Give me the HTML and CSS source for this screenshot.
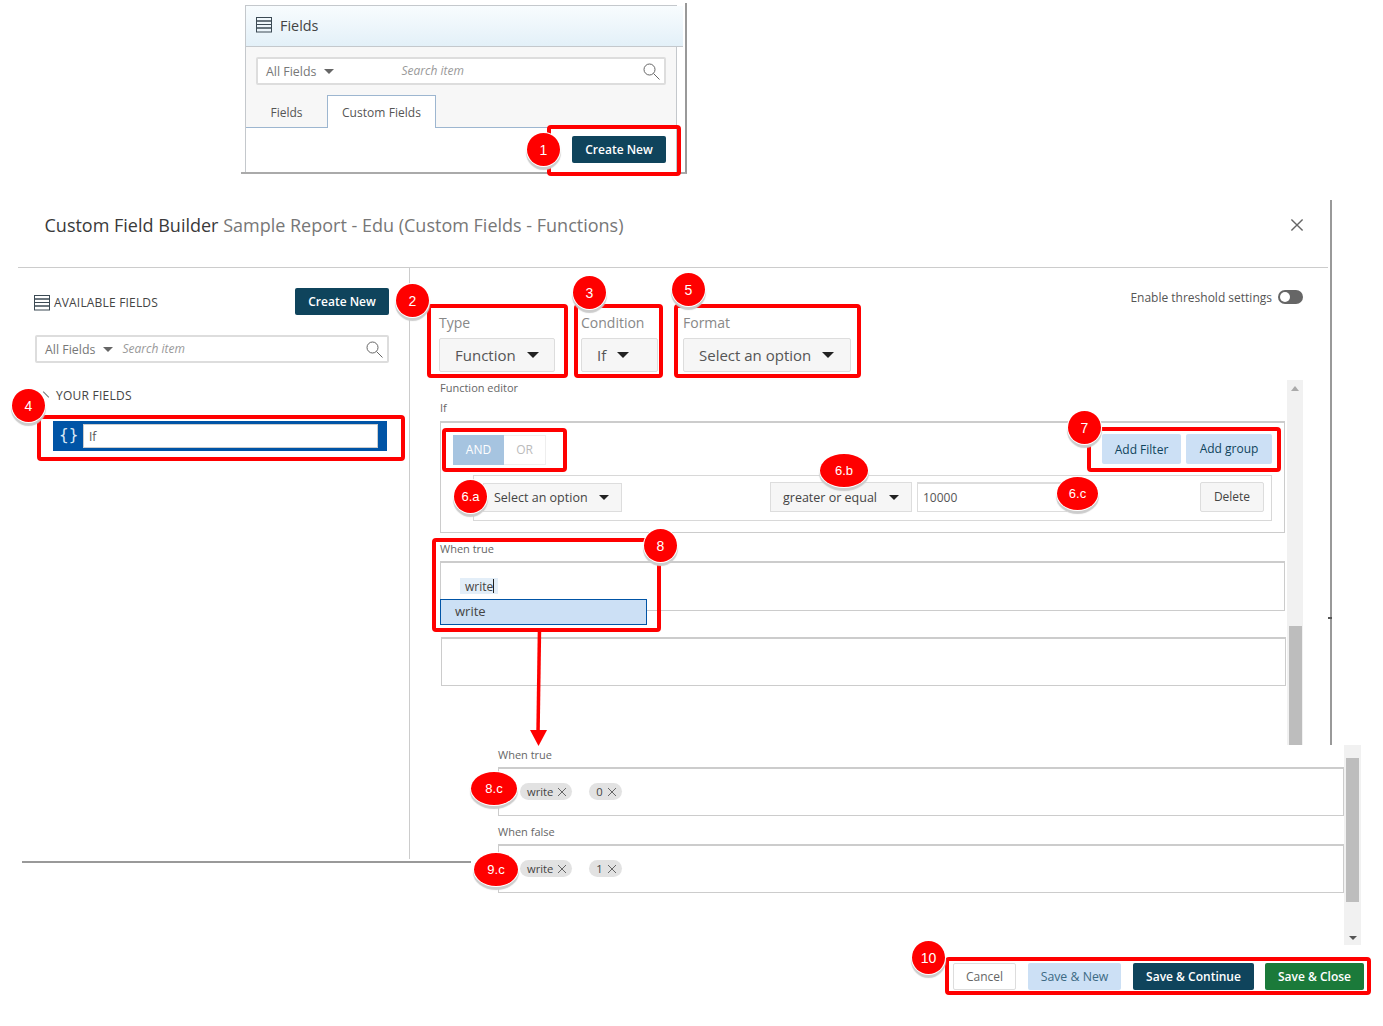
FILE: index.html
```html
<!DOCTYPE html>
<html lang="en">
<head>
<meta charset="utf-8">
<title>Custom Field Builder</title>
<link rel="stylesheet" href="styles.css">
</head>
<body>
<svg width="0" height="0" class="defs">
  <symbol id="list" viewBox="0 0 16 16"><g fill="none" stroke="#3c4a54" stroke-width="1"><rect x=".5" y=".5" width="15" height="3.5"/><rect x=".5" y="4" width="15" height="3.5"/><rect x=".5" y="7.5" width="15" height="3.5"/><rect x=".5" y="11" width="15" height="4"/></g></symbol>
  <symbol id="search" viewBox="0 0 17 17"><g fill="none" stroke="#666" stroke-width="1"><circle cx="6.5" cy="6.5" r="5.5"/><path d="M10.5 10.5l6 6"/></g></symbol>
  <symbol id="x" viewBox="0 0 10 10"><path d="M1 1l8 8M9 1l-8 8" stroke="#666" stroke-width="1" fill="none"/></symbol>
</svg>
<div class="stage">

  <section class="shot-fields">
    <div class="fields-panel">
      <header class="fields-head"><svg class="ico-list"><use href="#list"/></svg><span>Fields</span></header>
      <div class="fields-search">
        <div class="searchbox">
          <span class="sb-all">All Fields</span><i class="caret-sm"></i>
          <span class="sb-hint hint-far">Search item</span>
          <svg class="ico-search"><use href="#search"/></svg>
        </div>
      </div>
      <nav class="tabs"><span class="tab">Fields</span><span class="tab tab-on">Custom Fields</span></nav>
      <div class="fields-foot"><button class="btn btn-dark btn-create">Create New</button></div>
    </div>
  </section>

  <section class="shot-modal">
    <header class="modal-head">
      <h1 class="modal-title">Custom Field Builder <span>Sample Report - Edu (Custom Fields - Functions)</span></h1>
      <svg class="ico-close"><use href="#x"/></svg>
    </header>
    <div class="modal-body">
      <aside class="left">
        <div class="left-head">
          <div class="left-title"><svg class="ico-list"><use href="#list"/></svg><span>AVAILABLE FIELDS</span></div>
          <button class="btn btn-dark btn-create">Create New</button>
        </div>
        <div class="searchbox left-search">
          <span class="sb-all">All Fields</span><i class="caret-sm"></i>
          <span class="sb-hint">Search item</span>
          <svg class="ico-search"><use href="#search"/></svg>
        </div>
        <div class="your-fields">YOUR FIELDS</div>
        <div class="field-row"><span class="braces">{}</span><span class="field-input">If</span></div>
      </aside>
      <main class="right">
        <div class="controls">
          <div class="ctl ctl-type"><label>Type</label><div class="dd">Function<i class="caret"></i></div></div>
          <div class="ctl ctl-cond"><label>Condition</label><div class="dd">If<i class="caret"></i></div></div>
          <div class="ctl ctl-format"><label>Format</label><div class="dd">Select an option<i class="caret"></i></div></div>
          <div class="threshold"><span>Enable threshold settings</span><i class="switch"></i></div>
        </div>
        <div class="editor">
          <div class="editor-main">
            <div class="small-label">Function editor</div>
            <div class="small-label if-label">If</div>
            <div class="query">
              <div class="query-top">
                <div class="andor"><span class="and">AND</span><span class="or">OR</span></div>
                <div class="adds"><button class="btn btn-light btn-add1">Add Filter</button><button class="btn btn-light btn-add2">Add group</button></div>
              </div>
              <div class="query-row">
                <div class="mini-dd dd-a">Select an option<i class="caret-sm dark"></i></div>
                <div class="mini-dd dd-b">greater or equal<i class="caret-sm dark"></i></div>
                <div class="num">10000</div>
                <button class="btn btn-del">Delete</button>
              </div>
            </div>
            <div class="small-label when-true">When true</div>
            <div class="expr expr-true">
              <span class="typing">write</span>
              <div class="suggest">write</div>
            </div>
            <div class="expr expr-false"></div>
          </div>
          <div class="scroll scroll-a"><i class="arr-up"></i><i class="thumb"></i></div>
        </div>
      </main>
    </div>
  </section>
  <div class="modal-bottom"></div>

  <section class="shot-when">
    <div class="when-main">
      <div class="small-label wl-1">When true</div>
      <div class="expr2"><span class="chip">write<svg class="ico-x"><use href="#x"/></svg></span><span class="chip">0<svg class="ico-x"><use href="#x"/></svg></span></div>
      <div class="small-label wl-2">When false</div>
      <div class="expr2"><span class="chip">write<svg class="ico-x"><use href="#x"/></svg></span><span class="chip">1<svg class="ico-x"><use href="#x"/></svg></span></div>
    </div>
    <div class="scroll scroll-b"><i class="thumb"></i><i class="arr-down"></i></div>
  </section>

  <footer class="actions">
    <button class="btn btn-cancel">Cancel</button>
    <button class="btn btn-light btn-new">Save &amp; New</button>
    <button class="btn btn-dark btn-cont">Save &amp; Continue</button>
    <button class="btn btn-green">Save &amp; Close</button>
  </footer>

  <i class="mark m1"></i><i class="mark m2"></i><i class="mark m3"></i><i class="mark m5"></i>
  <i class="mark m4"></i><i class="mark m6"></i><i class="mark m7"></i><i class="mark m8"></i><i class="mark m10"></i>

  <svg class="arrow" width="30" height="120" viewBox="0 0 30 120"><path d="M15.5 0L14 106" stroke="#f00" stroke-width="3.500" fill="none"/><path d="M6 102h17l-8.500 16z" fill="#f00"/></svg>

  <b class="badge b1">1</b><b class="badge b2">2</b><b class="badge b3">3</b><b class="badge b5">5</b>
  <b class="badge b4">4</b><b class="badge b6a">6.a</b><b class="badge b6b">6.b</b><b class="badge b6c">6.c</b>
  <b class="badge b7">7</b><b class="badge b8">8</b><b class="badge b8c">8.c</b><b class="badge b9c">9.c</b><b class="badge b10">10</b>
</div>
</body>
</html>
```
FILE: styles.css
```css
* { box-sizing: border-box; }
html, body { margin: 0; padding: 0; background: #fff; }
body { font-family: "Open Sans", "Liberation Sans", sans-serif; color: #444; overflow: hidden; }
.defs { position: absolute; }
.stage { position: relative; width: 1383px; height: 1026px; overflow: hidden; }
button { font-family: inherit; }
i { display: block; font-style: normal; }

/* buttons */
.btn { border: 0; border-radius: 2px; padding: 0; font-size: 12px; cursor: default; }
.btn-dark { background: #0f445c; color: #fff; font-weight: 600; }
.btn-light { background: #cce0f5; color: #0f445c; font-size: 12px; }
.btn-create { width: 94px; height: 27px; }

/* carets */
.caret { width: 0; height: 0; border-left: 6.5px solid transparent; border-right: 6.5px solid transparent; border-top: 6.5px solid #222; margin-left: 11px; }
.caret-sm { width: 0; height: 0; border-left: 5px solid transparent; border-right: 5px solid transparent; border-top: 5px solid #666; }
.caret-sm.dark { border-top-color: #222; }

/* search box */
.searchbox { display: flex; align-items: center; height: 28px; background: #fff; border: 2px solid #ddd; border-radius: 2px; padding: 0 4px 0 8px; font-size: 12.4px; }
.sb-all { color: #777; margin-right: 8px; }
.sb-hint { color: #999; font-style: italic; font-size: 12px; margin-left: 9px; line-height: 16px; }
.hint-far { margin-left: 67px; }
.ico-search { width: 17px; height: 17px; margin-left: auto; }
.ico-list { width: 16px; height: 16px; flex: none; }

/* top fields shot */
.shot-fields { position: absolute; left: 241px; top: 3px; width: 446px; height: 171px; border-right: 2px solid #999; border-bottom: 2px solid #aaa; padding: 2px 8px 0 4px; }
.fields-panel { height: 100%; border: 1px solid #c4c8cc; border-bottom: 0; display: flex; flex-direction: column; background: #fff; }
.fields-head { height: 41px; margin-right: -7px; display: flex; align-items: center; gap: 8px; padding: 0 0 2px 10px; background: linear-gradient(#f8fcfe, #e3f0f8); border-bottom: 1px solid #c4c8cc; font-size: 14.4px; color: #444; }
.fields-search { background: #f7f7f7; padding: 10px 10px 10px; }
.tabs { background: #f7f7f7; height: 33px; display: flex; padding-left: 10px; border-bottom: 1px solid #9db6d0; }
.tab { width: 61px; height: 33px; line-height: 36px; text-align: center; font-size: 12px; color: #555; margin-right: 10px; }
.tab-on { width: 109px; background: #fff; border: 1px solid #9db6d0; border-bottom: 0; height: 33px; margin: 0; line-height: 34px; letter-spacing: .05px; }
.fields-foot { display: flex; justify-content: flex-end; padding: 8px 10px 0 0; }
.fields-foot .btn-create { height: 27px; }

/* modal */
.shot-modal { position: absolute; left: 18px; top: 200px; width: 1314px; height: 662px; border-right: 2px solid #999; display: flex; flex-direction: column; }
.shot-modal::after { content: ""; position: absolute; right: -2px; top: 417px; width: 4px; height: 2px; background: #555; }
.modal-head { height: 68px; flex: none; display: flex; align-items: flex-start; justify-content: space-between; padding: 13px 24px 0 26.500px; border-bottom: 1px solid #ccc; margin-right: 2px; }
.modal-title { margin: 0; font-size: 18px; line-height: 25px; font-weight: 400; color: #3a3a3a; }
.modal-title span { color: #777; }
.ico-close { width: 14px; height: 14px; margin-top: 5px; }
.modal-body { display: flex; height: 591px; }
.left { width: 392px; flex: none; border-right: 1px solid #ccc; padding: 20px 20px 0 17px; }
.left-head { display: flex; justify-content: space-between; align-items: center; height: 27px; }
.left-title { display: flex; align-items: center; gap: 4px; font-size: 12px; color: #444; margin-left: -1px; padding-top: 2px; letter-spacing: .18px; }
.left-search { margin-top: 20px; }
.your-fields { position: relative; margin: 24px 0 0 21px; font-size: 12px; line-height: 17px; color: #444; letter-spacing: .25px; }
.your-fields::before { content: ""; position: absolute; left: -14px; top: 7px; width: 8px; height: 1px; background: #777; transform: rotate(45deg); }
.field-row { display: flex; align-items: center; margin: 17px 2px 0 18px; height: 30px; background: #0054a6; padding: 0 9px 0 6px; }
.braces { width: 24px; color: #d8e8f5; font-family: "DejaVu Sans Mono", monospace; font-size: 16px; line-height: 20px; white-space: nowrap; margin-top: -2px; }
.field-input { flex: 1; height: 24px; line-height: 24px; background: #fff; border: 1px solid #ccc; padding-left: 5px; font-size: 12px; color: #555; }
.right { flex: 1; min-width: 0; display: flex; flex-direction: column; }
.controls { display: flex; align-items: flex-start; padding: 22px 27px 0 29px; height: 104px; }
.ctl { margin-top: 25px; }
.ctl label { display: block; height: 23px; font-size: 14px; line-height: 16px; color: #888; }
.dd { display: flex; align-items: center; height: 34px; background: #f6f6f6; border: 1px solid #ddd; border-radius: 2px; padding: 0 15px; font-size: 15px; color: #555; white-space: nowrap; }
.ctl-type { width: 116px; margin-right: 26px; }
.ctl-cond { width: 77px; margin-right: 25px; }
.ctl-format { width: 168px; }
.threshold { margin-left: auto; display: flex; align-items: center; gap: 6px; height: 14px; font-size: 12px; color: #555; }
.switch { position: relative; width: 25px; height: 14px; border-radius: 7px; background: #666; }
.switch::after { content: ""; position: absolute; left: 2px; top: 2px; width: 10px; height: 10px; border-radius: 50%; background: #fff; }
.editor { display: flex; margin-top: 8px; height: 365px; padding-left: 30px; width: 893px; }
.editor-main { width: 845px; flex: none; }
.small-label { font-size: 11px; line-height: 16px; color: #666; }
.if-label { margin-top: 4px; }
.query { margin-top: 5px; height: 112px; border: 1px solid #ccc; border-top-width: 2px; padding: 12px 12px 0 12px; }
.query-top { display: flex; justify-content: space-between; align-items: flex-start; height: 40px; }
.andor { display: flex; height: 30px; font-size: 12px; line-height: 30px; text-align: center; }
.and { width: 51px; background: #a6c4e0; color: #fff; }
.or { width: 42px; border: 1px solid #eee; border-left: 0; color: #bbb; line-height: 28px; }
.adds { display: flex; gap: 5px; margin-top: -1px; }
.btn-add1 { width: 79px; height: 30px; }
.btn-add2 { width: 86px; height: 30px; padding-bottom: 2px; }
.query-row { display: flex; align-items: flex-start; height: 46px; margin-left: 20px; border: 1px solid #d8d8d8; padding: 6px 7px 0 9px; }
.mini-dd { display: flex; align-items: center; justify-content: space-between; height: 30px; background: #f6f6f6; border: 1px solid #ddd; padding: 0 12px; font-size: 12.5px; color: #444; }
.dd-a { width: 139px; height: 29px; margin-top: 1px; padding-left: 10px; }
.dd-b { width: 142px; margin-left: 148px; }
.num { width: 150px; height: 30px; line-height: 27px; margin-left: 5px; border: 1px solid #ddd; border-top-width: 2px; padding-left: 5px; font-size: 12px; color: #555; }
.btn-del { width: 64px; height: 30px; margin-left: auto; background: #f6f6f6; border: 1px solid #ddd; color: #444; padding-bottom: 2px; }
.when-true { margin-top: 8px; }
.expr { position: relative; height: 49px; border: 1px solid #ccc; border-top-width: 2px; background: #fff; }
.expr-true { height: 50px; margin-top: 4px; padding: 15px 0 0 19px; }
.expr-false { margin: 26px -1px 0 1px; }
.typing { position: relative; display: block; width: 38px; height: 16px; line-height: 17px; padding-left: 5px; background: #e3eef8; font-size: 12px; color: #444; }
.typing::after { content: ""; position: absolute; left: 33px; top: 1px; width: 1px; height: 14px; background: #222; }
.suggest { position: absolute; left: -1px; top: 36px; width: 207px; height: 26px; line-height: 23px; padding-left: 14px; background: #cce0f5; border: 1px solid #0054a6; font-size: 13px; color: #444; }
.scroll { position: relative; display: flex; flex-direction: column; align-items: center; background: #f1f1f1; }
.scroll-a { width: 16px; margin-left: 2px; }
.arr-up { margin-top: 6px; width: 0; height: 0; border-left: 4px solid transparent; border-right: 4px solid transparent; border-bottom: 5px solid #aaa; }
.scroll-a .thumb { width: 13px; height: 119px; margin-top: auto; background: #bdbdbd; }
.modal-bottom { position: absolute; left: 22px; top: 861px; width: 449px; height: 2px; background: #999; }

/* lower shot */
.shot-when { position: absolute; left: 480px; top: 745px; width: 881px; height: 200px; background: #fff; display: flex; padding-left: 18px; }
.when-main { width: 846px; flex: none; }
.wl-1 { margin-top: 2px; }
.wl-2 { margin-top: 8px; }
.expr2 { height: 49px; margin-top: 4px; border: 1px solid #ccc; border-top-width: 2px; display: flex; align-items: flex-start; gap: 17px; padding: 14px 0 0 21px; }
.chip { display: flex; align-items: center; gap: 4px; height: 17px; padding: 0 5px 0 7px; border-radius: 9px; background: #e2e2e2; font-size: 11.200px; color: #444; }
.ico-x { width: 10px; height: 10px; }
.scroll-b { width: 17px; flex: none; }
.scroll-b .thumb { width: 13px; height: 144px; margin-top: 13px; background: #bdbdbd; }
.arr-down { margin-top: auto; margin-bottom: 5px; width: 0; height: 0; border-left: 4px solid transparent; border-right: 4px solid transparent; border-top: 4px solid #555; }

/* footer */
.actions { position: absolute; left: 953px; top: 963px; display: flex; height: 27px; }
.actions .btn { height: 27px; }
.btn-cancel { width: 63px; background: #fff; border: 1px solid #ddd; color: #666; }
.btn-new { width: 93px; margin-left: 12px; color: #3c6a84; font-size: 12.300px; }
.btn-cont { width: 121px; margin-left: 12px; }
.btn-green { width: 99px; margin-left: 11px; background: #1b7a3a; color: #fff; font-weight: 600; }

/* annotations */
.mark { position: absolute; border: 4px solid #f00; border-radius: 4px; }
.m1 { left: 547px; top: 125px; width: 134px; height: 51px; }
.m2 { left: 427px; top: 304px; width: 141px; height: 74px; }
.m3 { left: 574px; top: 304px; width: 89px; height: 74px; }
.m5 { left: 674px; top: 304px; width: 187px; height: 74px; }
.m4 { left: 37px; top: 415px; width: 368px; height: 46px; }
.m6 { left: 442px; top: 428px; width: 125px; height: 44px; }
.m7 { left: 1087px; top: 427px; width: 194px; height: 45px; }
.m8 { left: 432px; top: 538px; width: 229px; height: 94px; }
.m10 { left: 945px; top: 957px; width: 426px; height: 38px; }
.arrow { position: absolute; left: 524px; top: 628px; }
.badge { position: absolute; display: flex; align-items: center; justify-content: center; height: 33px; width: 33px; border-radius: 50%; background: #f00; color: #fff; font-family: "Liberation Sans", sans-serif; font-size: 14px; font-weight: 400; box-shadow: 0 0 0 1px #fff, 0 3px 1px 1px #ccc; }
.b1 { left: 527px; top: 133px; }
.b2 { left: 396px; top: 284px; }
.b3 { left: 573px; top: 276px; }
.b5 { left: 672px; top: 273px; }
.b4 { left: 12px; top: 389px; }
.b6a { left: 454px; top: 480px; font-size: 13px; }
.b6b { left: 820px; top: 454px; width: 48px; font-size: 13px; }
.b6c { left: 1057px; top: 477px; width: 41px; font-size: 13px; }
.b7 { left: 1068px; top: 411px; }
.b8 { left: 644px; top: 529px; }
.b8c { left: 471px; top: 772px; width: 46px; font-size: 13px; }
.b9c { left: 474px; top: 853px; width: 44px; font-size: 13px; }
.b10 { left: 912px; top: 941px; }
```
